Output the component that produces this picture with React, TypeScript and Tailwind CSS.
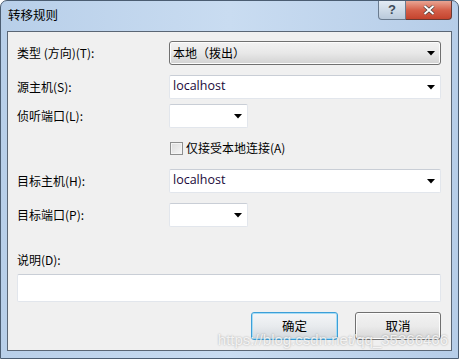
const cn = '"Noto Sans CJK SC", "Liberation Sans", sans-serif';

function Arrow() {
  return (
    <svg width="8" height="5" viewBox="0 0 8 5" className="shrink-0">
      <path d="M0 0 H8 L4 4.5 Z" fill="#000" />
    </svg>
  );
}

function Combo({ w, value }: { w: string; value?: string }) {
  return (
    <div
      className={`${w} h-[24px] flex items-center justify-between bg-white border border-[#e2e6ec] border-t-[#c9ced6] pl-[3px] pr-[5px] rounded-[2px]`}
    >
      <span className="text-[12.5px] text-[#1a0a3a] leading-none pb-[1px]" style={{ fontFamily: '"Open Sans", "Noto Sans", sans-serif' }}>
        {value}
      </span>
      <Arrow />
    </div>
  );
}

function Label({ children }: { children: React.ReactNode }) {
  return <div className="w-[152px] shrink-0 text-[12px] text-black">{children}</div>;
}

export default function App() {
  return (
    <div
      className="w-[459px] h-[359px] flex flex-col rounded-t-[7px] border border-[#4b5d72] bg-gradient-to-r from-[#b8cfe9] via-[#c9dcf1] to-[#b6cde8] overflow-hidden"
      style={{ fontFamily: cn }}
    >
      {/* title bar */}
      <div className="h-[30px] shrink-0 flex items-start justify-between pl-[7px] pr-[6px]">
        <div className="pt-[5px] text-[12.5px] text-black">转移规则</div>
        <div className="flex">
          <div className="w-[28px] h-[19px] flex items-center justify-center rounded-bl-[4px] border border-t-0 border-[#6a7b8f] bg-gradient-to-b from-[#e3ebf4] via-[#cfdbe8] to-[#b9c9db] text-[13px] font-bold text-[#3f4a57]" style={{ fontFamily: '"Liberation Sans", sans-serif' }}>
            ?
          </div>
          <div className="w-[46px] h-[19px] flex items-center justify-center rounded-br-[4px] border border-l-0 border-t-0 border-[#6a3a33] bg-gradient-to-b from-[#e8a493] via-[#d5604a] to-[#c4432d]">
            <svg width="12" height="10" viewBox="0 0 12 10">
              <path d="M1.5 1 L10.5 9 M10.5 1 L1.5 9" stroke="#3a3a3a" strokeWidth="3.2" />
              <path d="M1.5 1 L10.5 9 M10.5 1 L1.5 9" stroke="#fff" strokeWidth="2" />
            </svg>
          </div>
        </div>
      </div>

      {/* client area */}
      <div className="flex-1 mx-[6px] mb-[7px] border border-[#5a6675] bg-[#f0f0f0] relative">
        <div className="pl-[9px] pr-[10px] pt-[9px] flex flex-col">
          <div className="flex items-center h-[24px]">
            <Label>类型 (方向)(T):</Label>
            <div className="flex-1 h-[24px] flex items-center justify-between rounded-[3px] border border-[#707070] bg-gradient-to-b from-[#f2f2f2] via-[#e8e8e8] to-[#d2d2d2] pl-[3px] pr-[5px] shadow-[inset_0_0_0_1px_#fcfcfc]">
              <span className="text-[12px] text-black">本地（拨出）</span>
              <Arrow />
            </div>
          </div>

          <div className="flex items-center mt-[10px]">
            <Label>源主机(S):</Label>
            <Combo w="flex-1" value="localhost" />
          </div>

          <div className="flex items-center mt-[5px]">
            <Label>侦听端口(L):</Label>
            <Combo w="w-[79px]" />
          </div>

          <div className="flex items-center mt-[13px] ml-[153px] h-[14px]">
            <div className="w-[13px] h-[13px] border border-[#8e8f8f] bg-gradient-to-br from-[#dcdcdc] to-[#f6f6f6] shadow-[inset_0_0_0_1px_#f4f4f4]" />
            <span className="ml-[3px] text-[12px] text-black">仅接受本地连接(A)</span>
          </div>

          <div className="flex items-center mt-[14px]">
            <Label>目标主机(H):</Label>
            <Combo w="flex-1" value="localhost" />
          </div>

          <div className="flex items-center mt-[10px]">
            <Label>目标端口(P):</Label>
            <Combo w="w-[79px]" />
          </div>

          <div className="mt-[24px] text-[12px] text-black h-[17px]">说明(D):</div>
          <div className="mt-[6px] h-[28px] bg-white border border-[#e2e6ec] border-t-[#c9ced6] rounded-[2px]" />

          <div className="flex justify-end gap-[17px] mt-[10px]">
            <div className="w-[87px] h-[28px] flex items-center justify-center rounded-[3px] border border-[#3c9fd8] bg-gradient-to-b from-[#f4f6f8] via-[#e8ebee] to-[#d4d9de] shadow-[inset_0_0_0_1px_#a6dcf5] text-[12.5px] text-black">
              确定
            </div>
            <div className="w-[86px] h-[28px] flex items-center justify-center rounded-[3px] border border-[#707070] bg-gradient-to-b from-[#f2f2f2] via-[#ebebeb] to-[#d6d6d6] shadow-[inset_0_0_0_1px_#fcfcfc] text-[12.5px] text-black">
              取消
            </div>
          </div>
        </div>

        {/* watermark */}
        <div
          className="absolute right-[3px] bottom-[3px] text-[15px] leading-none text-white/80 [text-shadow:0_0_2px_rgba(0,0,0,0.35)] pointer-events-none"
          style={{ fontFamily: '"Liberation Sans", sans-serif' }}
        >
          https://blog.csdn.net/qq_35366466
        </div>
      </div>
    </div>
  );
}
